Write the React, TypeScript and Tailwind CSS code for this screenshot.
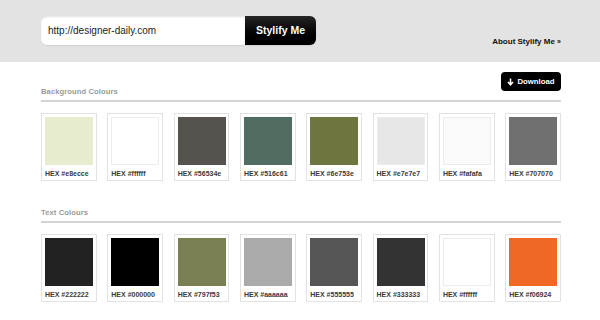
import React from "react";

const bg = ["#e8ecce", "#ffffff", "#56534e", "#516c61", "#6e753e", "#e7e7e7", "#fafafa", "#707070"];
const tx = ["#222222", "#000000", "#797f53", "#aaaaaa", "#555555", "#333333", "#ffffff", "#f06924"];

function Card({ c }: { c: string }) {
  const light = ["#ffffff", "#fafafa", "#e7e7e7"].includes(c);
  return (
    <div className="border border-[#e2e2e2] bg-white p-[3px] pb-0 h-[68px]">
      <div
        className={`w-[48px] h-[48px] ${light ? "border border-[#ececec]" : ""}`}
        style={{ backgroundColor: c }}
      />
      <div className="text-[7px] font-bold text-[#3a3a3a] leading-none mt-[5px] whitespace-nowrap">
        HEX {c}
      </div>
    </div>
  );
}

function Section({ title, colors, right }: { title: string; colors: string[]; right?: React.ReactNode }) {
  return (
    <div>
      <div className="flex items-end justify-between">
        <div className="text-[7.6px] font-bold text-[#9a9a9a] leading-none tracking-[0.1px]">{title}</div>
        {right}
      </div>
      <div className="h-[2px] bg-[#d4d4d4] mt-[4px]" />
      <div className="grid grid-cols-8 gap-x-[10.5px] mt-[11px]">
        {colors.map((c, i) => (
          <Card key={i} c={c} />
        ))}
      </div>
    </div>
  );
}

export default function App() {
  return (
    <div className="w-[600px] h-[320px] bg-white overflow-hidden" style={{ fontFamily: '"Liberation Sans", Arial, sans-serif' }}>
      <div className="h-[62px] bg-[#e3e3e3] flex items-start pl-[41px] pr-[39px]">
        <div className="flex mt-[16px] shadow-[0_1px_1px_rgba(0,0,0,0.08)] rounded-[6px]">
          <div className="w-[204px] h-[29px] bg-white rounded-l-[6px] flex items-center pl-[7px] text-[10px] text-[#222] shadow-[inset_0_1px_2px_rgba(0,0,0,0.12)]">
            http://designer-daily.com
          </div>
          <div className="w-[71px] h-[29px] rounded-r-[6px] bg-gradient-to-b from-[#262626] to-[#000] flex items-center justify-center text-white font-bold text-[10.5px]">
            Stylify Me
          </div>
        </div>
        <div className="ml-auto mt-[38px] text-[8px] font-bold text-[#111] leading-none whitespace-nowrap">
          About Stylify Me <span className="text-[7px]">»</span>
        </div>
      </div>
      <div className="ml-[41px] w-[520px] mt-[10px]">
        <Section
          title="Background Colours"
          colors={bg}
          right={
            <div className="w-[60px] h-[19px] bg-black rounded-[4px] flex items-center justify-center gap-[3px] text-white font-bold text-[7.8px] mb-[5px]">
              <svg width="7" height="8" viewBox="0 0 7 8">
                <path d="M3.5 0.5v6M1 4l2.5 2.8L6 4" stroke="white" strokeWidth="1.6" fill="none" />
              </svg>
              Download
            </div>
          }
        />
        <div className="mt-[28px]">
          <Section title="Text Colours" colors={tx} />
        </div>
      </div>
    </div>
  );
}
